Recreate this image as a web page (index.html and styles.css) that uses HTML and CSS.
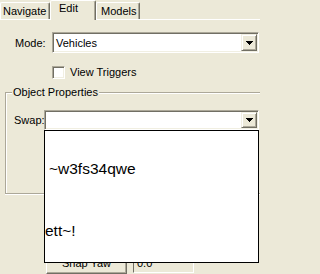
FILE: index.html
```html
<!DOCTYPE html>
<html>
<head>
<meta charset="utf-8">
<link rel="stylesheet" href="styles.css">
</head>
<body>
<div class="tabs">
  <div class="tab tab-nav">Navigate</div>
  <div class="tab tab-edit">Edit</div>
  <div class="tab tab-models">Models</div>
</div>
<div class="panel">
  <div class="row mode-row">
    <span class="lbl lbl-mode">Mode:</span>
    <div class="combo combo-mode">
      <span class="combo-text">Vehicles</span>
      <span class="dd-btn"><svg width="7" height="4" viewBox="0 0 7 4"><polygon points="0,0 7,0 3.5,4" fill="#000"/></svg></span>
    </div>
  </div>
  <div class="row check-row">
    <span class="checkbox"></span>
    <span class="check-label">View Triggers</span>
  </div>
  <fieldset class="group">
    <legend>Object Properties</legend>
    <div class="row swap-row">
      <span class="lbl lbl-swap">Swap:</span>
      <div class="combo combo-swap">
        <span class="combo-text"></span>
        <span class="dd-btn"><svg width="7" height="4" viewBox="0 0 7 4"><polygon points="0,0 7,0 3.5,4" fill="#000"/></svg></span>
      </div>
    </div>
  </fieldset>
  <div class="row snap-row">
    <div class="btn">Snap Yaw</div>
    <div class="edit">0.0</div>
  </div>
</div>
<div class="dropdown-list">
  <div class="item item-1">~w3fs34qwe</div>
  <div class="item item-2">ett~!</div>
</div>
</body>
</html>
```
FILE: styles.css
```css
html {
  margin: 0;
  padding: 0;
  overflow: hidden;
  background: #ECE9D8;
}
body {
  margin: 0;
  padding: 0;
  width: 260px;
  height: 274px;
  overflow: hidden;
  position: relative;
  background: #ECE9D8;
  font-family: "Liberation Sans", Arial, sans-serif;
  font-size: 11px;
  line-height: 13px;
  color: #000;
}
.tabs {
  display: flex;
  align-items: flex-end;
  width: 260px;
  height: 19px;
  border-bottom: 1px solid #fff;
}
.tab {
  box-sizing: border-box;
  height: 17px;
  border: 1px solid #fff;
  border-right-color: #716F64;
  border-bottom: none;
  border-radius: 2px 2px 0 0;
  box-shadow: inset -1px 0 0 #ACA899;
  background: #ECE9D8;
  padding-top: 2px;
  white-space: nowrap;
  overflow: hidden;
}
.tab-nav {
  width: 50px;
  padding-left: 2px;
}
.tab-edit {
  width: 46px;
  height: 20px;
  margin-bottom: -1px;
  padding-left: 8px;
  padding-top: 1px;
  position: relative;
  z-index: 1;
}
.tab-models {
  width: 44px;
  padding-left: 4px;
}
.row {
  display: flex;
  align-items: flex-start;
}
.mode-row {
  margin-top: 12px;
}
.lbl-mode {
  box-sizing: border-box;
  width: 52px;
  padding-left: 15px;
  padding-top: 5px;
}
.combo {
  box-sizing: border-box;
  display: flex;
  align-items: stretch;
  border: 1px solid;
  border-color: #ACA899 #fff #fff #ACA899;
  box-shadow: inset 1px 1px 0 #716F64, inset -1px -1px 0 #F1EFE2;
  background: #fff;
  padding: 1px;
}
.combo-mode {
  width: 207px;
  height: 21px;
}
.combo-swap {
  width: 215px;
  height: 20px;
}
.combo-text {
  flex: 1;
  padding-left: 2px;
  padding-top: 3px;
}
.dd-btn {
  box-sizing: border-box;
  width: 16px;
  display: flex;
  align-items: center;
  justify-content: center;
  background: #ECE9D8;
  border: 1px solid;
  border-color: #F1EFE2 #716F64 #716F64 #F1EFE2;
  box-shadow: inset 1px 1px 0 #fff, inset -1px -1px 0 #ACA899;
}
.dd-btn svg {
  display: block;
  shape-rendering: crispEdges;
}
.check-row {
  margin-top: 13px;
  align-items: center;
}
.checkbox {
  box-sizing: border-box;
  width: 13px;
  height: 13px;
  margin-left: 52px;
  background: #fff;
  border: 1px solid;
  border-color: #ACA899 #fff #fff #ACA899;
  box-shadow: inset 1px 1px 0 #716F64, inset -1px -1px 0 #F1EFE2;
}
.check-label {
  margin-left: 5px;
}
.group {
  box-sizing: border-box;
  margin: 7px 0 0 5px;
  padding: 0;
  width: 255px;
  height: 108px;
  min-width: 0;
  border: 1px solid #ACA899;
  border-right: none;
  box-shadow: inset 1px 1px 0 #fff, 0 1px 0 #fff;
}
.group legend {
  margin-left: 6px;
  padding: 0 1px;
  line-height: 13px;
  background: #ECE9D8;
}
.swap-row {
  margin-top: 11px;
}
.lbl-swap {
  box-sizing: border-box;
  width: 38px;
  padding-left: 8px;
  padding-top: 4px;
}
.snap-row {
  margin-top: 58px;
}
.btn {
  box-sizing: border-box;
  width: 81px;
  height: 22px;
  margin-left: 46px;
  text-align: center;
  padding-top: 4px;
  border: 1px solid;
  border-color: #fff #716F64 #716F64 #fff;
  box-shadow: inset -1px -1px 0 #ACA899;
}
.edit {
  box-sizing: border-box;
  width: 61px;
  height: 21px;
  margin-left: 6px;
  padding: 4px 0 0 3px;
  border: 1px solid;
  border-color: #ACA899 #fff #fff #716F64;
}
.dropdown-list {
  position: absolute;
  left: 44px;
  top: 130px;
  width: 215px;
  height: 133px;
  box-sizing: border-box;
  border: 1px solid #000;
  background: #fff;
  padding-top: 29px;
  font-size: 15.5px;
  line-height: 18px;
}
.item {
  white-space: nowrap;
}
.item-1 {
  padding-left: 4px;
}
.item-2 {
  margin-top: 44px;
}
```
